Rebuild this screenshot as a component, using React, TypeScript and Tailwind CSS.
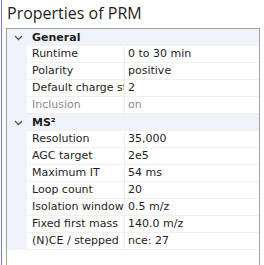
const sections = [
  {
    title: "General",
    rows: [
      { name: "Runtime", value: "0 to 30 min" },
      { name: "Polarity", value: "positive" },
      { name: "Default charge state", value: "2" },
      { name: "Inclusion", value: "on", disabled: true },
    ],
  },
  {
    title: "MS²",
    rows: [
      { name: "Resolution", value: "35,000" },
      { name: "AGC target", value: "2e5" },
      { name: "Maximum IT", value: "54 ms" },
      { name: "Loop count", value: "20" },
      { name: "Isolation window", value: "0.5 m/z" },
      { name: "Fixed first mass", value: "140.0 m/z" },
      { name: "(N)CE / stepped", value: "nce: 27" },
    ],
  },
];

const Chevron = () => (
  <svg width="9" height="6" viewBox="0 0 9 6" className="block">
    <path d="M1 1 L4.5 4.5 L8 1" fill="none" stroke="#555" strokeWidth="1.3" />
  </svg>
);

export default function App() {
  return (
    <div className="w-[264px] h-[265px] bg-white overflow-hidden flex font-['DejaVu_Sans',sans-serif] text-[11px] text-[#1e1e1e]">
      <div className="w-px" />
      <div className="w-px bg-[#7878dc]" />
      <div className="flex-1 flex flex-col">
        <div className="h-[28px] pl-[5px] pt-[3px] font-['Open_Sans',sans-serif] text-[16px] leading-[21px] text-[#1e1e1e]">
          Properties of PRM
        </div>
        <div className="ml-[4px] w-[254px] flex-1 border-l border-t border-r border-[#a0a0a0]">
          {sections.map((s) => (
            <div key={s.title}>
              <div className="h-[17px] flex items-center bg-[#f0f4fa]">
                <div className="w-[20px] flex justify-center pl-[2px]">
                  <Chevron />
                </div>
                <div className="pl-[5px] font-bold leading-[17px]">{s.title}</div>
              </div>
              {s.rows.map((r) => (
                <div key={r.name} className="h-[17px] flex">
                  <div className="w-[20px] bg-[#f0f4fa]" />
                  <div
                    className={
                      "w-[97px] pl-[5px] whitespace-nowrap overflow-hidden leading-[16px] border-b border-[#f0f0f0] " +
                      (r.disabled ? "text-[#8c8c8c]" : "")
                    }
                  >
                    {r.name}
                  </div>
                  <div className="w-px bg-[#f0f0f0]" />
                  <div
                    className={
                      "flex-1 pl-[3px] whitespace-nowrap overflow-hidden leading-[16px] border-b border-[#f0f0f0] " +
                      (r.disabled ? "text-[#8c8c8c]" : "")
                    }
                  >
                    {r.value}
                  </div>
                </div>
              ))}
            </div>
          ))}
        </div>
      </div>
    </div>
  );
}
